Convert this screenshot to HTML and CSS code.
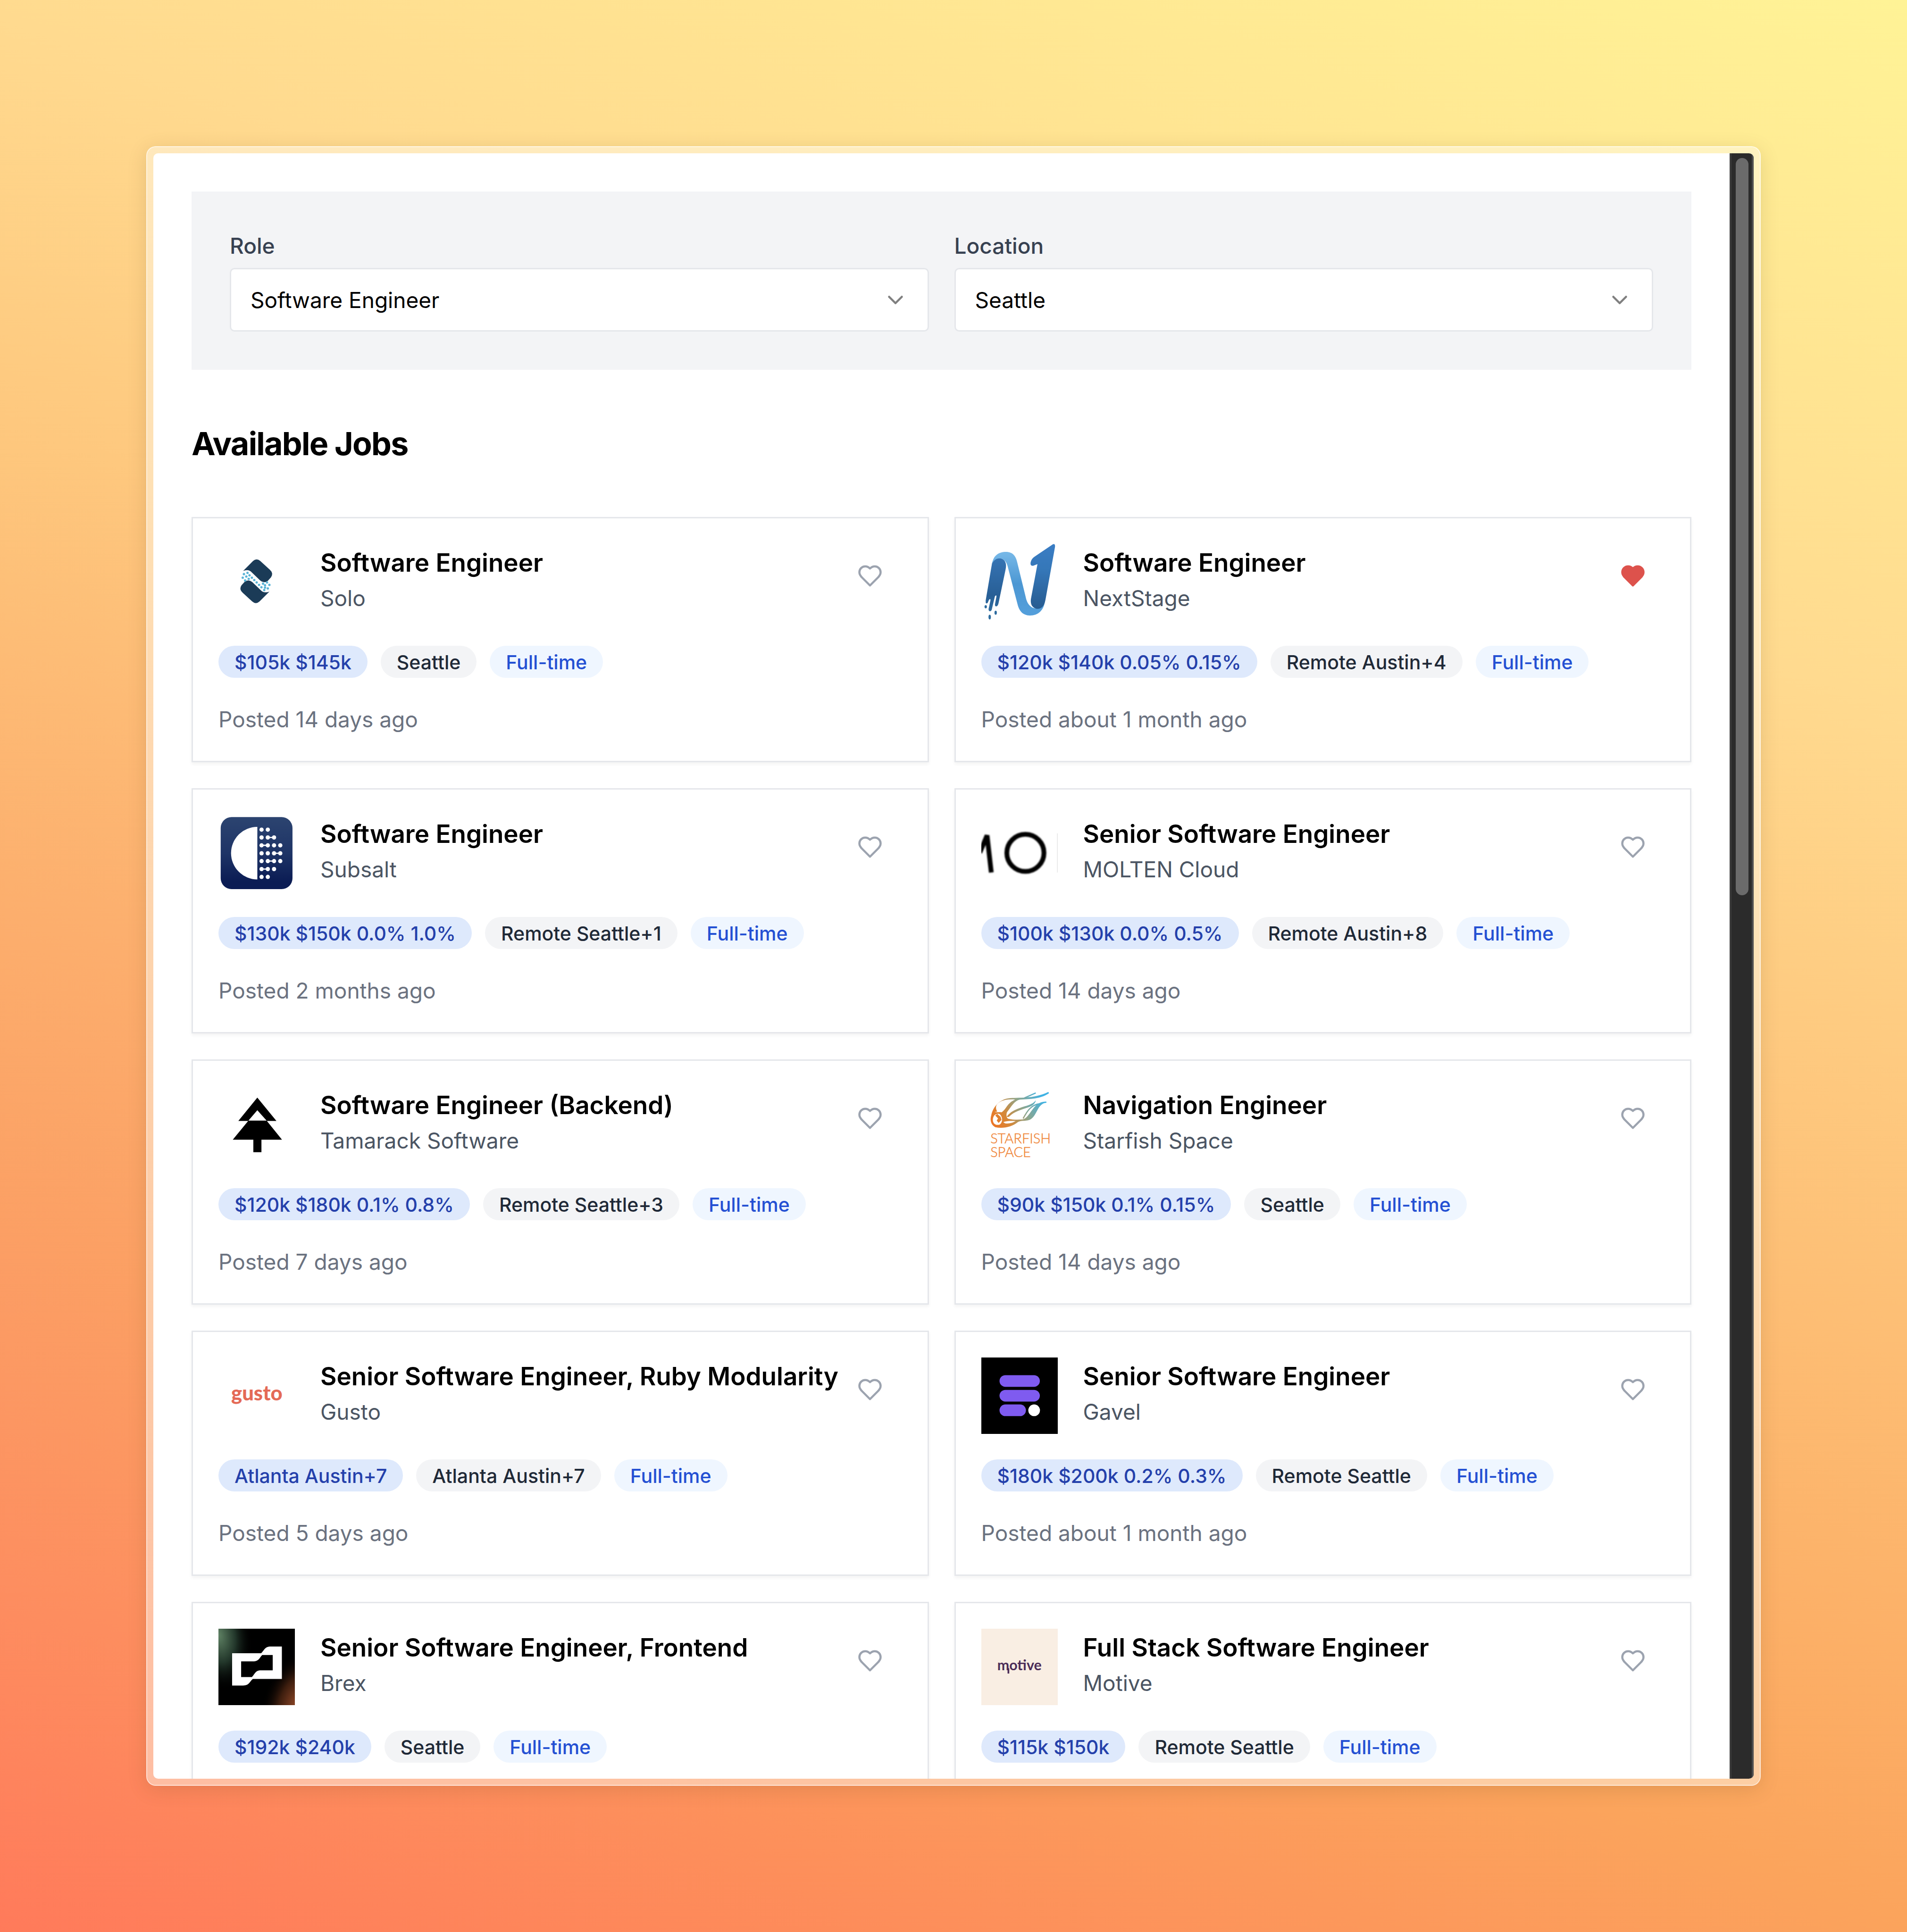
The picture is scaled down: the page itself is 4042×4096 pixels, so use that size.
FILE: index.html
```html
<!DOCTYPE html>
<html lang="en">
<head>
<meta charset="utf-8">
<meta name="viewport" content="width=device-width, initial-scale=1">
<title>Available Jobs</title>
<link rel="stylesheet" href="styles.css">
</head>
<body>
<svg class="sprite" aria-hidden="true">
  <symbol id="heart" viewBox="0 0 24 24"><path d="M19 14c1.490-1.460 3-3.210 3-5.500A5.500 5.500 0 0 0 16.500 3c-1.760 0-3 .5-4.500 2-1.500-1.500-2.740-2-4.500-2A5.500 5.500 0 0 0 2 8.500c0 2.300 1.500 4.050 3 5.500l7 7Z"/></symbol>
  <symbol id="chevron" viewBox="0 0 24 24"><path d="m6 9 6 6 6-6"/></symbol>
</svg>
<div class="frame">
  <div class="window">
    <main class="content">
      <form class="filters">
        <div class="field">
          <label for="role">Role</label>
          <div class="select">
            <select id="role"><option>Software Engineer</option></select>
            <svg class="chevron" aria-hidden="true"><use href="#chevron"/></svg>
          </div>
        </div>
        <div class="field">
          <label for="location">Location</label>
          <div class="select">
            <select id="location"><option>Seattle</option></select>
            <svg class="chevron" aria-hidden="true"><use href="#chevron"/></svg>
          </div>
        </div>
      </form>
      <h1>Available Jobs</h1>
      <div class="jobs">

        <article class="card">
          <header>
            <svg class="logo" viewBox="0 0 192 192" aria-hidden="true">
              <path id="solo-half" fill="#1b3b57" d="M62 68 L87 43 Q96 35 105 43 L129 65 Q139 74 132 84 L124 93 Q114 100 105 92 L84 72 Q76 63 62 68Z"/>
              <use href="#solo-half" transform="rotate(180 95 94)"/>
              <g fill="#5ab3d6">
                <circle cx="73" cy="73" r="3"/><circle cx="64" cy="76" r="3"/><circle cx="78" cy="79" r="3"/><circle cx="70" cy="82" r="3"/><circle cx="61" cy="85" r="3"/><circle cx="84" cy="85" r="3"/><circle cx="76" cy="88" r="3"/><circle cx="67" cy="92" r="3"/><circle cx="90" cy="91" r="3"/><circle cx="96" cy="97" r="3"/><circle cx="102" cy="103" r="3"/><circle cx="112" cy="100" r="3"/><circle cx="122" cy="97" r="3"/><circle cx="117" cy="104" r="3"/><circle cx="128" cy="103" r="3"/><circle cx="108" cy="109" r="3"/><circle cx="117" cy="110" r="3"/><circle cx="124" cy="112" r="3"/><circle cx="115" cy="116" r="3"/>
              </g>
            </svg>
            <div class="who"><h2>Software Engineer</h2><p>Solo</p></div>
            <button class="save" type="button" aria-label="Save job"><svg><use href="#heart"/></svg></button>
          </header>
          <ul class="tags"><li class="pay">$105k $145k</li><li class="place">Seattle</li><li class="type">Full-time</li></ul>
          <p class="posted">Posted 14 days ago</p>
        </article>

        <article class="card">
          <header>
            <svg class="logo" viewBox="0 0 192 192" aria-hidden="true">
              <defs>
                <linearGradient id="ns-mid" x1="0" y1="0" x2="0" y2="1"><stop offset="0" stop-color="#78b9e8"/><stop offset=".5" stop-color="#4c97d3"/><stop offset="1" stop-color="#549fdb"/></linearGradient>
                <linearGradient id="ns-leg" x1="0" y1="0" x2="0" y2="1"><stop offset="0" stop-color="#3573b3"/><stop offset=".7" stop-color="#285f96"/><stop offset="1" stop-color="#2e6c9f"/></linearGradient>
                <linearGradient id="ns-tip" x1="0" y1="0" x2="0" y2="1"><stop offset="0" stop-color="#3a7dc4"/><stop offset=".4" stop-color="#3577b8"/><stop offset="1" stop-color="#275b90"/></linearGradient>
              </defs>
              <path fill="url(#ns-leg)" d="M27 48 C32 34 50 32 58 42 Q64 50 61 64 L43 150 Q41 158 36 157 Q33 156 35 148 L38 132 Q38 127 34 132 L26 166 Q24 171 20 169 Q17 167 19 160 L23 142 Q23 136 19 141 L16 148 Q13 151 11 148 L11 142Z"/>
              <path fill="url(#ns-mid)" d="M27 50 C30 29 44 20 62 20 C79 20 87 31 90 46 L112 136 C117 160 138 170 148 154 L160 143 C157 167 143 180 122 180 C104 180 95 168 91 152 L66 56 C60 32 36 30 27 50Z"/>
              <path fill="url(#ns-tip)" d="M180 1 Q186 -1 185 8 L161 141 C158 157 150 165 138 163 Q121 158 125 136 L141 51 L130 55 Q122 56 124 46 Q126 37 134 32Z"/>
              <g fill="#2e6c9f"><ellipse cx="11" cy="158" rx="3" ry="4"/><ellipse cx="36" cy="173" rx="3" ry="5"/><ellipse cx="21" cy="184" rx="3" ry="6"/></g>
            </svg>
            <div class="who"><h2>Software Engineer</h2><p>NextStage</p></div>
            <button class="save saved" type="button" aria-label="Remove saved job" aria-pressed="true"><svg><use href="#heart"/></svg></button>
          </header>
          <ul class="tags"><li class="pay">$120k $140k 0.05% 0.15%</li><li class="place">Remote Austin+4</li><li class="type">Full-time</li></ul>
          <p class="posted">Posted about 1 month ago</p>
        </article>

        <article class="card">
          <header>
            <svg class="logo" viewBox="24 42 576 576" aria-hidden="true">
              <defs><linearGradient id="subsalt" x1="0" y1="0" x2="0" y2="1"><stop offset="0" stop-color="#2c4470"/><stop offset=".5" stop-color="#1e3466"/><stop offset=".9" stop-color="#0b1c54"/></linearGradient></defs>
              <rect x="41" y="57" width="541" height="543" rx="82" fill="url(#subsalt)"/>
              <path fill="#fff" d="M317 131 A197 197 0 0 0 317 527Z"/>
              <g fill="#fff">
                <circle cx="349" cy="152" r="16"/><circle cx="396" cy="152" r="16"/>
                <circle cx="349" cy="211" r="16"/><circle cx="396" cy="211" r="16"/><circle cx="443" cy="211" r="16"/>
                <circle cx="349" cy="270" r="16"/><circle cx="396" cy="270" r="16"/><circle cx="443" cy="270" r="16"/><circle cx="490" cy="270" r="16"/>
                <circle cx="349" cy="330" r="16"/><circle cx="396" cy="330" r="16"/><circle cx="443" cy="330" r="16"/><circle cx="490" cy="330" r="16"/>
                <circle cx="349" cy="389" r="16"/><circle cx="396" cy="389" r="16"/><circle cx="443" cy="389" r="16"/><circle cx="490" cy="389" r="16"/>
                <circle cx="349" cy="449" r="16"/><circle cx="396" cy="449" r="16"/><circle cx="443" cy="449" r="16"/>
                <circle cx="349" cy="508" r="16"/><circle cx="396" cy="508" r="16"/>
              </g>
              <path stroke="#fff" stroke-width="9" d="M396 211H443M349 270H396M443 330H490M396 389H443M349 449H396"/>
            </svg>
            <div class="who"><h2>Software Engineer</h2><p>Subsalt</p></div>
            <button class="save" type="button" aria-label="Save job"><svg><use href="#heart"/></svg></button>
          </header>
          <ul class="tags"><li class="pay">$130k $150k 0.0% 1.0%</li><li class="place">Remote Seattle+1</li><li class="type">Full-time</li></ul>
          <p class="posted">Posted 2 months ago</p>
        </article>

        <article class="card">
          <header>
            <svg class="logo" viewBox="60 42 576 576" aria-hidden="true">
              <g class="molten"><path d="M48 325 Q75 265 103 195 L135 475"/><circle cx="392" cy="327" r="140"/></g>
              <path stroke="#ddd" stroke-width="4" d="M633 180V475"/>
            </svg>
            <div class="who"><h2>Senior Software Engineer</h2><p>MOLTEN Cloud</p></div>
            <button class="save" type="button" aria-label="Save job"><svg><use href="#heart"/></svg></button>
          </header>
          <ul class="tags"><li class="pay">$100k $130k 0.0% 0.5%</li><li class="place">Remote Austin+8</li><li class="type">Full-time</li></ul>
          <p class="posted">Posted 14 days ago</p>
        </article>

        <article class="card">
          <header>
            <svg class="logo" viewBox="24 42 576 576" aria-hidden="true">
              <path fill-rule="evenodd" d="M317 127 L461 303 H389 L503 445 H348 V539 H287 V445 H132 L248 303 H174Z M317 222 L250 301 H387Z"/>
            </svg>
            <div class="who"><h2>Software Engineer (Backend)</h2><p>Tamarack Software</p></div>
            <button class="save" type="button" aria-label="Save job"><svg><use href="#heart"/></svg></button>
          </header>
          <ul class="tags"><li class="pay">$120k $180k 0.1% 0.8%</li><li class="place">Remote Seattle+3</li><li class="type">Full-time</li></ul>
          <p class="posted">Posted 7 days ago</p>
        </article>

        <article class="card">
          <header>
            <svg class="logo" viewBox="60 42 576 576" aria-hidden="true">
              <defs><linearGradient id="comet" gradientUnits="userSpaceOnUse" x1="130" y1="340" x2="560" y2="100"><stop offset="0" stop-color="#f07323"/><stop offset=".28" stop-color="#d58838"/><stop offset=".55" stop-color="#8fa58a"/><stop offset=".9" stop-color="#3fb2e4"/></linearGradient></defs>
              <g fill="url(#comet)">
                <path d="M135 260 C150 190 205 140 265 133 C340 124 450 140 565 85 L570 94 C500 140 430 136 350 142 C310 150 285 195 255 235 C245 250 250 285 262 286 C300 296 340 294 372 292 C430 280 450 150 551 158 L550 166 C480 170 480 270 425 294 C385 308 360 296 335 312 C290 350 220 362 165 350 C135 335 122 300 135 260Z M160 237 C178 240 190 234 212 238 C250 215 250 170 315 142 C230 135 185 160 172 190 C168 205 172 220 180 232Z M147 290 C145 325 170 340 200 330 C225 310 220 265 195 250 C165 245 150 265 147 290Z M240 322 C270 325 300 316 318 304 C290 302 250 302 225 312Z" fill-rule="evenodd"/>
                <path d="M252 270 C290 215 370 200 420 182 C450 172 460 160 471 148 C465 175 445 190 410 202 C350 222 305 235 270 270 Q258 276 252 270Z"/>
                <path d="M165 262 L180 250 L205 272 L212 295 L190 318 L176 300 L186 285Z"/>
              </g>
              <path fill="none" stroke="url(#comet)" stroke-width="9" d="M385 130 Q430 110 470 92 M375 285 C400 240 430 180 502 174"/>
              <g class="starfish"><text x="128" y="473">STARFISH</text><text x="128" y="575">SPACE</text></g>
            </svg>
            <div class="who"><h2>Navigation Engineer</h2><p>Starfish Space</p></div>
            <button class="save" type="button" aria-label="Save job"><svg><use href="#heart"/></svg></button>
          </header>
          <ul class="tags"><li class="pay">$90k $150k 0.1% 0.15%</li><li class="place">Seattle</li><li class="type">Full-time</li></ul>
          <p class="posted">Posted 14 days ago</p>
        </article>

        <article class="card">
          <header>
            <svg class="logo" viewBox="24 42 576 576" aria-hidden="true"><text class="gusto" x="313" y="364" text-anchor="middle">gusto</text></svg>
            <div class="who"><h2>Senior Software Engineer, Ruby Modularity</h2><p>Gusto</p></div>
            <button class="save" type="button" aria-label="Save job"><svg><use href="#heart"/></svg></button>
          </header>
          <ul class="tags"><li class="pay">Atlanta Austin+7</li><li class="place">Atlanta Austin+7</li><li class="type">Full-time</li></ul>
          <p class="posted">Posted 5 days ago</p>
        </article>

        <article class="card">
          <header>
            <svg class="logo" viewBox="60 42 576 576" aria-hidden="true">
              <rect x="60" y="42" width="576" height="576"/>
              <g fill="#7f5bf0"><rect x="197" y="175" width="304" height="88" rx="44"/><rect x="197" y="286" width="304" height="88" rx="44"/><rect x="197" y="396" width="199" height="88" rx="44"/></g>
              <circle cx="458" cy="440" r="44" fill="#fff"/>
            </svg>
            <div class="who"><h2>Senior Software Engineer</h2><p>Gavel</p></div>
            <button class="save" type="button" aria-label="Save job"><svg><use href="#heart"/></svg></button>
          </header>
          <ul class="tags"><li class="pay">$180k $200k 0.2% 0.3%</li><li class="place">Remote Seattle</li><li class="type">Full-time</li></ul>
          <p class="posted">Posted about 1 month ago</p>
        </article>

        <article class="card">
          <header>
            <svg class="logo" viewBox="24 42 576 576" aria-hidden="true">
              <defs>
                <radialGradient id="brex-green" gradientUnits="userSpaceOnUse" cx="0" cy="0" r="1" gradientTransform="translate(24 90) rotate(-10) scale(250 420)"><stop offset="0" stop-color="#5f8264"/><stop offset=".5" stop-color="#22362a"/><stop offset="1" stop-color="#000" stop-opacity="0"/></radialGradient>
                <radialGradient id="brex-rust" gradientUnits="userSpaceOnUse" cx="0" cy="0" r="1" gradientTransform="translate(610 600) rotate(20) scale(250 420)"><stop offset="0" stop-color="#8a4526"/><stop offset=".5" stop-color="#3c1d0e"/><stop offset="1" stop-color="#000" stop-opacity="0"/></radialGradient>
              </defs>
              <rect x="24" y="42" width="576" height="576"/>
              <rect x="24" y="42" width="576" height="576" fill="url(#brex-green)"/>
              <rect x="24" y="42" width="576" height="576" fill="url(#brex-rust)"/>
              <path fill="#fff" d="M127 227 H346 C370 204 372 176 420 176 H502 V421 H283 C257 442 258 470 210 470 H127Z"/>
              <path d="M195 288 H285 C330 288 332 262 354 240 H433 V356 H345 C300 356 300 384 276 406 H195Z"/>
            </svg>
            <div class="who"><h2>Senior Software Engineer, Frontend</h2><p>Brex</p></div>
            <button class="save" type="button" aria-label="Save job"><svg><use href="#heart"/></svg></button>
          </header>
          <ul class="tags"><li class="pay">$192k $240k</li><li class="place">Seattle</li><li class="type">Full-time</li></ul>
        </article>

        <article class="card">
          <header>
            <svg class="logo" viewBox="60 42 576 576" aria-hidden="true">
              <rect x="60" y="42" width="576" height="576" fill="#f9eee3"/>
              <text class="motive" x="347" y="354" text-anchor="middle">motive</text>
              <path stroke="#4b2c58" stroke-width="13" d="M264 340V380"/>
            </svg>
            <div class="who"><h2>Full Stack Software Engineer</h2><p>Motive</p></div>
            <button class="save" type="button" aria-label="Save job"><svg><use href="#heart"/></svg></button>
          </header>
          <ul class="tags"><li class="pay">$115k $150k</li><li class="place">Remote Seattle</li><li class="type">Full-time</li></ul>
        </article>

      </div>
    </main>
    <div class="scrollbar" aria-hidden="true"><div class="thumb"></div></div>
  </div>
</div>
</body>
</html>
```
FILE: styles.css
```css
* {
  box-sizing: border-box;
  margin: 0;
  padding: 0;
}

body {
  display: grid;
  grid-template: minmax(0, 1fr) / minmax(0, 1fr);
  height: 100vh;
  padding: 310px;
  background:
    radial-gradient(ellipse at 0 65%, rgba(255, 130, 150, .14), rgba(255, 130, 150, 0) 45%),
    linear-gradient(20deg, #ff7a59 0%, #fba45c 27%, #ffda8f 73%, #fff396 100%);
  color: #000;
  font-family: Inter, "Liberation Sans", sans-serif;
  font-size: 46px;
  line-height: 68px;
}

.sprite {
  position: absolute;
  width: 0;
  height: 0;
}

.frame {
  padding: 13px;
  border: 2px solid rgba(255, 255, 255, .75);
  border-radius: 20px;
  background: rgba(255, 250, 240, .48);
  background-clip: padding-box;
  box-shadow: 0 8px 40px rgba(80, 60, 20, .15);
}

.window {
  display: flex;
  height: 100%;
  overflow: hidden;
  border-radius: 10px;
  background: #fff;
}

.content {
  flex: 1;
  min-width: 0;
  padding: 81px 81px 0;
}

.filters {
  display: grid;
  grid-template-columns: 1fr 1fr;
  gap: 54px;
  padding: 81px;
  background: #f3f4f6;
}

.field {
  display: grid;
  gap: 13px;
}

label {
  color: #374151;
  font-weight: 500;
}

.select {
  display: grid;
  align-items: center;
}

.select > * {
  grid-area: 1 / 1;
}

select {
  width: 100%;
  height: 135px;
  padding: 0 41px;
  border: 3px solid #e5e7eb;
  border-radius: 10px;
  appearance: none;
  background: #fff;
  color: #000;
  font: inherit;
}

svg.chevron {
  justify-self: end;
  width: 54px;
  height: 54px;
  margin-right: 44px;
  fill: none;
  stroke: #808080;
  stroke-width: 2;
  stroke-linecap: round;
  stroke-linejoin: round;
  pointer-events: none;
}

h1 {
  margin: 108px 0;
  font-size: 68px;
  line-height: 96px;
  font-weight: 700;
  letter-spacing: -.025em;
}

.jobs {
  display: grid;
  grid-template-columns: repeat(2, minmax(0, 1fr));
  gap: 55px 54px;
}

.card {
  display: flex;
  flex-direction: column;
  gap: 54px;
  min-height: 520px;
  padding: 54px;
  border: 3px solid #e5e7eb;
  box-shadow: 0 4px 7px rgba(0, 0, 0, .05);
}

.card header {
  display: flex;
}

.logo {
  flex: none;
  width: 162px;
  height: 162px;
  margin-right: 54px;
}

.who {
  flex: 1;
  min-width: 0;
  white-space: nowrap;
}

h2 {
  font-size: 53px;
  line-height: 81px;
  font-weight: 600;
}

.who p {
  color: #4b5563;
}

.save {
  display: grid;
  place-items: center;
  flex: none;
  width: 135px;
  height: 135px;
  border: 0;
  background: none;
}

.save svg {
  width: 54px;
  height: 54px;
  fill: none;
  stroke: #9ca3af;
  stroke-width: 2;
  stroke-linecap: round;
  stroke-linejoin: round;
}

.saved svg {
  fill: #dd524c;
  stroke: #dd524c;
}

.tags {
  display: flex;
  gap: 28px;
  list-style: none;
}

.tags li {
  padding: 8px 34px 6px;
  border-radius: 34px;
  font-size: 41px;
  line-height: 54px;
  font-weight: 500;
}

.pay {
  background: #dee9fc;
  color: #2440ab;
}

.place {
  background: #f3f4f6;
  color: #1f2937;
}

.type {
  background: #eff6ff;
  color: #2450d3;
}

.posted {
  color: #6b7280;
}

.scrollbar {
  flex: none;
  width: 51px;
  padding: 10px 7px 0 9px;
  border-right: 4px solid #4d4d4d;
  border-left: 4px solid #3c3c3c;
  background: #2b2b2b;
}

.thumb {
  height: 45.5%;
  border-radius: 15px;
  background: #6b6b6b;
}

.molten {
  filter: blur(5px);
  fill: none;
  stroke: #000;
  stroke-width: 36px;
}

.starfish {
  fill: #f0883c;
  stroke: #f0883c;
  stroke-width: 2px;
  font: 300 103px Lato, sans-serif;
}

.gusto {
  fill: #e46a57;
  font: 900 155px Lato, sans-serif;
}

.motive {
  fill: #4b2c58;
  font: 700 108px Lato, sans-serif;
}
```
